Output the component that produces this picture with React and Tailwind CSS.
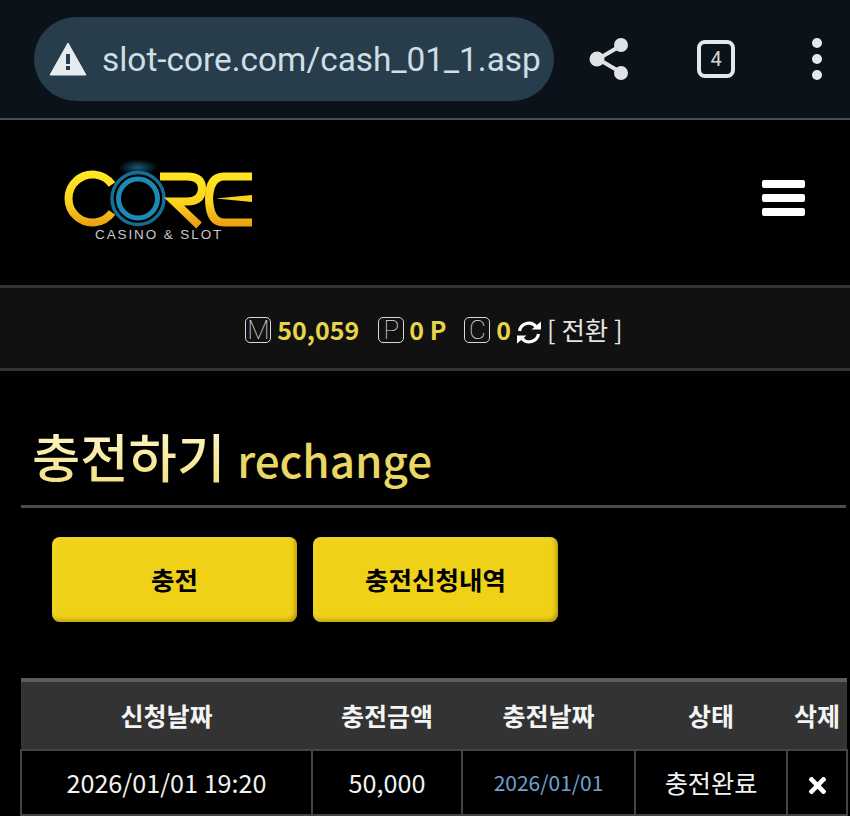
import React from 'react';
import { FaTimes } from 'react-icons/fa';

const KR = "font-['Noto_Sans_CJK_KR','Noto_Sans',sans-serif]";

const CoreLogo = () => (
  <svg width="200" height="90" viewBox="55 157.5 200 90" className="block">
    <defs>
      <linearGradient id="gold" gradientUnits="userSpaceOnUse" x1="0" y1="170" x2="0" y2="228">
        <stop offset="0" stopColor="#ffe925" />
        <stop offset="0.55" stopColor="#fbd31c" />
        <stop offset="1" stopColor="#e9980f" />
      </linearGradient>
      <radialGradient id="glow">
        <stop offset="0" stopColor="#1f7fa8" stopOpacity="0.7" />
        <stop offset="1" stopColor="#1f7fa8" stopOpacity="0" />
      </radialGradient>
    </defs>
    <ellipse cx="138" cy="167" rx="20" ry="8" fill="url(#glow)" />
    {/* C */}
    <path d="M112 184 A24 24 0 1 0 112 212" fill="none" stroke="url(#gold)" strokeWidth="8" />
    {/* O */}
    <circle cx="138" cy="198" r="26" fill="#000" stroke="#156e94" strokeWidth="3.5" />
    <circle cx="138" cy="198" r="19.5" fill="none" stroke="#1c8ab5" strokeWidth="5" />
    {/* R */}
    <path d="M160 176 H187 Q202 176 202 188 Q202 201 187 201 H174 L199 225" fill="none" stroke="url(#gold)" strokeWidth="8" />
    {/* E */}
    <path d="M252 172 H224 Q205 172 205 198 Q205 226 224 226 H252 V218 H224 Q214 218 213 198 Q214 180 224 180 H252 Z" fill="url(#gold)" />
    <path d="M216 198 L252 194.5 V201.5 Z" fill="#fbd31c" />
  </svg>
);

const Badge = ({ letter }) => (
  <span className="w-[26px] h-[26px] border border-[#d8d8d8] rounded-[5px] flex items-center justify-center text-[26px] font-thin text-[#e4e4e4] font-['Roboto',sans-serif] leading-none">
    {letter}
  </span>
);

const Th = ({ children }) => (
  <th className="font-bold text-[25px] text-[#f4f4f4] text-center p-0 h-[70px]">{children}</th>
);

const Td = ({ children, className = '' }) => (
  <td className={`border-2 border-[#444] text-center p-0 h-[65px] ${className}`}>{children}</td>
);

const tabClass = "w-[245px] h-[85px] rounded-lg bg-[#efd218] shadow-[inset_-2px_-2px_4px_rgba(130,100,0,0.5),inset_2px_2px_4px_rgba(255,240,120,0.3)] text-black font-bold text-[25.5px]";

export default function App() {
  return (
    <div className={`w-[850px] h-[816px] overflow-hidden bg-black ${KR}`}>
      {/* browser bar */}
      <div className="h-[120px] bg-[#0c1219] border-b-2 border-[#4a4d50] flex items-center pl-[34px]">
        <div className="w-[520px] h-[84px] rounded-[42px] bg-[#273d4b] flex items-center pl-[15px] pr-[10px]">
          <svg width="38" height="34" viewBox="0 0 38 34" className="shrink-0">
            <path d="M19 1 L37 33 H1 Z" fill="#e4ecf0" stroke="#e4ecf0" strokeLinejoin="round" strokeWidth="1" />
            <rect x="17" y="12" width="4" height="10" fill="#273d4b" />
            <rect x="17" y="24" width="4" height="4" fill="#273d4b" />
          </svg>
          <div className="ml-[15px] mt-[3px] whitespace-nowrap text-[33.4px] text-[#cfdde4] font-['Roboto',sans-serif]">
            slot-core.com/cash_01_1.asp
          </div>
        </div>
        <svg width="42" height="44" viewBox="0 0 42 44" className="ml-[35px] shrink-0">
          <path d="M33 8 L9 22 L33 36" fill="none" stroke="#dfe3e6" strokeWidth="4" />
          <circle cx="32" cy="8" r="7" fill="#dfe3e6" />
          <circle cx="8" cy="22" r="7.5" fill="#dfe3e6" />
          <circle cx="32" cy="36" r="7" fill="#dfe3e6" />
        </svg>
        <div className="ml-[66px] w-[38px] h-[38px] border-[4px] border-[#e4e8ea] rounded-[8px] flex items-center justify-center text-[20px] text-[#d4d8da] font-['Roboto',sans-serif] shrink-0">
          4
        </div>
        <div className="ml-[77px] flex flex-col gap-[6px] shrink-0">
          <span className="w-[10px] h-[10px] rounded-full bg-[#e4e8ea]" />
          <span className="w-[10px] h-[10px] rounded-full bg-[#e4e8ea]" />
          <span className="w-[10px] h-[10px] rounded-full bg-[#e4e8ea]" />
        </div>
      </div>

      {/* site header */}
      <div className="h-[165px] flex items-center justify-between pl-[55px] pr-[45px]">
        <div className="flex flex-col relative">
          <CoreLogo />
          <span className="absolute left-[40px] top-[67px] text-[13.5px] tracking-[1.9px] text-[#c9c9c9] font-['Liberation_Sans',sans-serif] whitespace-nowrap">
            CASINO &amp; SLOT
          </span>
        </div>
        <div className="flex flex-col gap-[6px] mb-[10px]">
          <span className="w-[43px] h-[8px] bg-white rounded-[2px]" />
          <span className="w-[43px] h-[8px] bg-white rounded-[2px]" />
          <span className="w-[43px] h-[8px] bg-white rounded-[2px]" />
        </div>
      </div>

      {/* balance */}
      <div className="h-[86px] bg-[#111111] border-y-[3px] border-[#333] flex items-center justify-center pl-[18px] pt-[3px] text-[#e6d54a] font-bold text-[25px]">
        <Badge letter="M" />
        <span className="ml-[6px]">50,059</span>
        <span className="ml-[19px]"><Badge letter="P" /></span>
        <span className="ml-[5px]">0 P</span>
        <span className="ml-[18px]"><Badge letter="C" /></span>
        <span className="ml-[6px]">0</span>
        <svg width="26" height="25" viewBox="0 0 26 25" className="ml-[5px] mt-[6px] shrink-0" fill="none">
          <path d="M3.5 11 A9.5 9.5 0 0 1 20 6.5" stroke="#fff" strokeWidth="3.2" />
          <path d="M15.5 9.5 H25 V1.5 Z" fill="#fff" />
          <path d="M22.5 14 A9.5 9.5 0 0 1 6 18.5" stroke="#fff" strokeWidth="3.2" />
          <path d="M10.5 15.5 H1 V23.5 Z" fill="#fff" />
        </svg>
        <span className="ml-[5px] font-normal text-[25.5px] text-[#e4e4e4]">[ 전환 ]</span>
      </div>

      {/* title */}
      <div className="mx-[21px] mr-[4px] h-[137px] border-b-[3px] border-[#4c4c4c] flex items-baseline pl-[11px] pt-[44px] leading-none">
        <span className="text-[52.5px] font-medium leading-[80px] bg-gradient-to-b from-[#fffbd8] to-[#f2dc70] bg-clip-text text-transparent">충전하기</span>
        <span className="ml-[12px] text-[44px] font-medium leading-[80px] text-[#e9d663]">rechange</span>
      </div>

      {/* tabs */}
      <div className="flex gap-[16px] pl-[52px] mt-[29px]">
        <button className={tabClass}>충전</button>
        <button className={tabClass}>충전신청내역</button>
      </div>

      {/* table */}
      <table className="ml-[20px] mt-[56px] w-[826px] table-fixed border-collapse border-t-[4px] border-[#5c5c5c]">
        <colgroup>
          <col className="w-[291px]" />
          <col className="w-[150px]" />
          <col className="w-[173px]" />
          <col className="w-[152px]" />
          <col className="w-[60px]" />
        </colgroup>
        <thead className="bg-[#333333]">
          <tr>
            <Th>신청날짜</Th>
            <Th>충전금액</Th>
            <Th>충전날짜</Th>
            <Th>상태</Th>
            <Th>삭제</Th>
          </tr>
        </thead>
        <tbody>
          <tr className="text-[#f2f2f2] text-[25.2px]">
            <Td>2026/01/01 19:20</Td>
            <Td>50,000</Td>
            <Td className="text-[21px] text-[#6ea3d0]">2026/01/01</Td>
            <Td>충전완료</Td>
            <Td><FaTimes className="inline-block text-white text-[25px]" /></Td>
          </tr>
        </tbody>
      </table>
    </div>
  );
}
